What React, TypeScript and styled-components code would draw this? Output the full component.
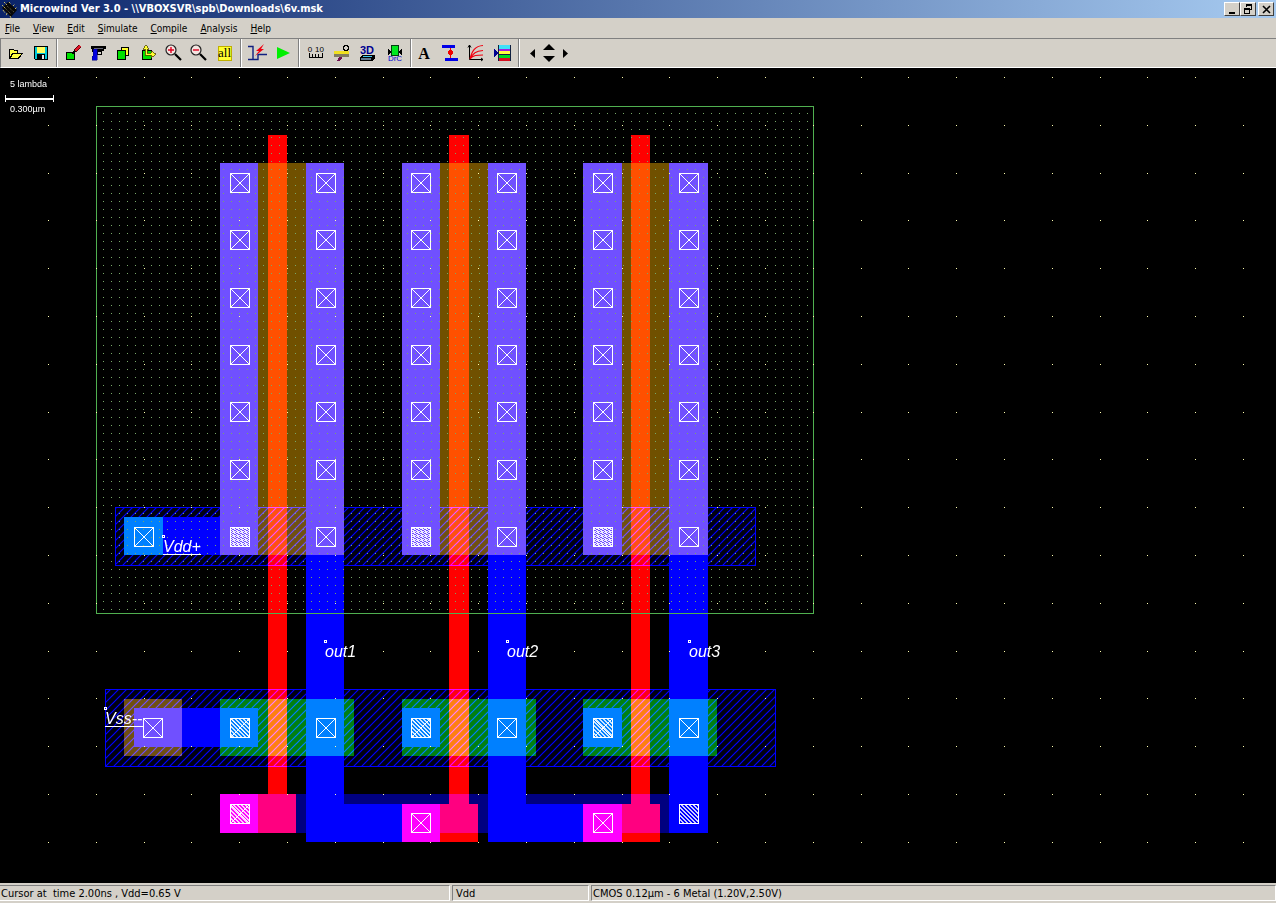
import React from "react";
import styled, { createGlobalStyle, css } from "styled-components";

const FACE = "#d4d0c8";
const SHADOW = "#808080";
const UI_FONT = '"DejaVu Sans Condensed", "Liberation Sans", sans-serif';

const GlobalStyle = createGlobalStyle`
  *, *::before, *::after { box-sizing: border-box; }
  body { margin: 0; background: ${FACE}; font-family: ${UI_FONT}; font-size: 10px; color: #000; }
`;

const Window = styled.div`
  display: flex;
  flex-direction: column;
  min-height: 100vh;
`;

const TitleBar = styled.header`
  display: flex;
  align-items: center;
  gap: 2px;
  height: 18px;
  padding: 0 2px 0 1px;
  background: linear-gradient(to right, #0a246a, #a6caf0);
`;

const Title = styled.h1`
  flex: 1;
  margin: 0;
  font-size: 11px;
  line-height: 18px;
  font-weight: bold;
  color: #fff;
  white-space: nowrap;
`;

const WindowButton = styled.button<{ $apart?: boolean }>`
  display: flex;
  align-items: center;
  justify-content: center;
  width: 16px;
  height: 14px;
  padding: 0;
  margin-left: ${(p) => (p.$apart ? "2px" : "0")};
  border: 1px solid;
  border-color: #fff #404040 #404040 #fff;
  background: ${FACE};
`;

const Controls = styled.div`
  display: flex;
`;

const MenuBar = styled.nav`
  display: flex;
  gap: 13px;
  height: 20px;
  padding: 1px 5px 0;
`;

const MenuButton = styled.button`
  padding: 0;
  border: 0;
  background: none;
  color: #000;
  font: 10px/19px ${UI_FONT};
`;

const ToolBar = styled.div`
  display: flex;
  align-items: center;
  height: 30px;
  padding-left: 1px;
  border-top: 1px solid ${SHADOW};
  border-left: 1px solid ${SHADOW};
  border-bottom: 1px solid #fff;
`;

const ToolGroup = styled.div<{ $start: number; $end: number }>`
  display: flex;
  align-items: center;
  height: 28px;
  padding: 0 ${(p) => p.$end}px 0 ${(p) => p.$start}px;

  & + & {
    border-left: 1px solid ${SHADOW};
    box-shadow: inset 1px 0 0 #fff;
  }
`;

const ToolButton = styled.button<{ $wide?: boolean }>`
  display: flex;
  align-items: center;
  justify-content: center;
  width: ${(p) => (p.$wide ? "26px" : "25px")};
  height: 26px;
  padding: 0;
  border: 0;
  background: none;
`;

const PanPad = styled.div`
  display: grid;
  grid-template-columns: 5px 28px 5px;
  align-items: center;
  justify-items: center;
`;

const PanColumn = styled.div`
  display: flex;
  flex-direction: column;
  gap: 6px;
`;

const PanButton = styled.button`
  display: block;
  padding: 0;
  border: 0;
  background: none;
  line-height: 0;
`;

const Icon = styled.svg`
  display: block;
  overflow: visible;
`;

const IconText = styled.text<{ $size: number; $serif?: boolean; $bold?: boolean }>`
  font-family: ${(p) => (p.$serif ? '"Liberation Serif", serif' : '"Liberation Sans", sans-serif')};
  font-size: ${(p) => p.$size}px;
  font-weight: ${(p) => (p.$bold ? "bold" : "normal")};
  text-anchor: middle;
`;

const Workspace = styled.main`
  flex: 1;
  display: flex;
  min-height: 815px;
  background: #000;
`;

const Drawing = styled.svg`
  flex: 1;
  display: block;
  min-width: 0;
  isolation: isolate;
`;

const additive = css`
  mix-blend-mode: screen;
`;

type Material = "metal1" | "metal2" | "poly" | "pdiff" | "ndiff";

const materialColor: Record<Material, string> = {
  metal1: "#0000ff",
  metal2: "#000080",
  poly: "#ff0000",
  pdiff: "#705000",
  ndiff: "#008000",
};

const Layer = styled.path<{ $material: Material }>`
  fill: ${(p) => materialColor[p.$material]};
  ${additive}
`;

const HatchedBus = styled.rect`
  stroke: #0000ff;
  ${additive}
`;

const NetLabel = styled.text`
  font: italic 16px "Liberation Sans", sans-serif;
  fill: #fff;
`;

const ScaleText = styled.text`
  font: 9px "Liberation Sans", sans-serif;
  fill: #fff;
`;

const StatusBar = styled.footer`
  display: grid;
  grid-template-columns: 450px 137px 1fr;
  gap: 2px;
  height: 21px;
  padding: 2px 0 2px;
  border-bottom: 1px solid #fff;
`;

const StatusPane = styled.div`
  padding: 0 1px;
  border: 1px solid;
  border-color: ${SHADOW} #fff #fff ${SHADOW};
  font-size: 11px;
  line-height: 16px;
  white-space: pre;
  overflow: hidden;

  &:first-child { border-left: 0; }
  &:nth-child(2) { padding-left: 3px; }
`;

type Box = [x1: number, y1: number, x2: number, y2: number];

const boxes = (list: Box[]) =>
  list.map(([a, b, c, d]) => `M${a} ${b}H${c}V${d}H${a}Z`).join("");

const materials: { material: Material; shapes: Box[] }[] = [
  {
    material: "pdiff",
    shapes: [
      [220, 163, 344, 555],
      [402, 163, 526, 555],
      [583, 163, 708, 555],
      [124, 699, 182, 756],
    ],
  },
  {
    material: "ndiff",
    shapes: [
      [124, 517, 163, 555],
      [220, 699, 354, 756],
      [402, 699, 536, 756],
      [583, 699, 717, 756],
    ],
  },
  {
    material: "poly",
    shapes: [
      [268, 135, 287, 794],
      [220, 794, 296, 833],
      [449, 135, 469, 804],
      [402, 804, 478, 842],
      [631, 135, 650, 804],
      [583, 804, 660, 842],
    ],
  },
  {
    material: "metal1",
    shapes: [
      [124, 517, 220, 555],
      [220, 163, 258, 555],
      [402, 163, 440, 555],
      [583, 163, 622, 555],
      [306, 163, 344, 842],
      [344, 804, 440, 842],
      [488, 163, 526, 842],
      [526, 804, 622, 842],
      [669, 163, 708, 833],
      [134, 708, 258, 747],
      [402, 708, 440, 747],
      [583, 708, 622, 747],
      [220, 794, 258, 833],
    ],
  },
  { material: "metal2", shapes: [[220, 794, 708, 833]] },
];

const rowCentres = [183, 240, 298, 355, 412, 470];
const leftCentres = [240, 421, 603];
const rightCentres = [326, 507, 689];

type Cut = { x: number; y: number; fill?: "via" | "stack"; cross?: boolean };

const contacts: Cut[] = [
  ...rowCentres.flatMap((y) => [...leftCentres, ...rightCentres].map((x) => ({ x, y }))),
  ...rightCentres.flatMap((x) => [{ x, y: 537 }, { x, y: 728 }]),
  { x: 144, y: 537 },
  { x: 153, y: 728 },
  { x: 421, y: 823 },
  { x: 603, y: 823 },
  ...leftCentres.map((x): Cut => ({ x, y: 537, fill: "stack", cross: false })),
  ...leftCentres.map((x): Cut => ({ x, y: 728, fill: "via" })),
  { x: 240, y: 814, fill: "via" },
  { x: 689, y: 814, fill: "via", cross: false },
];

const Contact = ({ x, y, fill, cross = true }: Cut) => (
  <g stroke="#fff" fill="none">
    <rect
      x={x - 9.5}
      y={y - 9.5}
      width={19}
      height={19}
      fill={fill ? `url(#${fill})` : "none"}
      shapeRendering="crispEdges"
    />
    {cross && <path d={`M${x - 9} ${y - 9}l18 18M${x + 9} ${y - 9}l-18 18`} strokeWidth={1} />}
  </g>
);

const nets = [
  { name: "Vdd+", x: 163, y: 552, px: 163, py: 536, line: 554 },
  { name: "Vss--", x: 105, y: 724, px: 105, py: 708, line: 726 },
  { name: "out1", x: 325, y: 657, px: 325, py: 641 },
  { name: "out2", x: 507, y: 657, px: 507, py: 641 },
  { name: "out3", x: 689, y: 657, px: 689, py: 641 },
];

const GRID = 47.8;
const majorDots = (() => {
  let d = "";
  for (let r = 0; r < 17; r++)
    for (let c = 0; c < 26; c++)
      d += `M${Math.round(48 + c * GRID)} ${Math.round(77 + r * GRID)}h1v1h-1z`;
  return d;
})();

const Layout = () => (
  <Drawing role="img" aria-label="Layout of three inverters">
    <defs>
      <pattern id="welldots" width="8" height="8" patternUnits="userSpaceOnUse" x="7" y="1">
        <rect width="1" height="1" fill="#78a868" />
      </pattern>
      <pattern id="hatch" width="8" height="8" patternUnits="userSpaceOnUse">
        <rect width="8" height="8" fill="#000012" />
        <path d="M-1 9L9 -1M-1 1L1 -1M7 9L9 7" stroke="#0000ff" strokeWidth="1.2" />
      </pattern>
      <pattern id="via" width="4" height="4" patternUnits="userSpaceOnUse">
        <path d="M0 0h2v1h-2zM1 1h2v1h-2zM2 2h2v1h-2zM3 3h1v1h-1zM0 3h1v1h-1z" fill="#fff" fillOpacity="0.8" />
      </pattern>
      <pattern id="stack" width="4" height="4" patternUnits="userSpaceOnUse">
        <path d="M0 0h3v1h-3zM2 1h2v1h-2zM0 2h2v1h-2zM1 3h3v1h-3z" fill="#fff" fillOpacity="0.9" />
      </pattern>
    </defs>
    <g transform="translate(0 -68)">
      <rect y="68" width="100%" height="100%" fill="#000" />
      <g shapeRendering="crispEdges">
        {materials.map((m) => (
          <Layer key={m.material} $material={m.material} d={boxes(m.shapes)} />
        ))}
      </g>
      <HatchedBus x="115.5" y="507.5" width="640" height="58" fill="url(#hatch)" />
      <HatchedBus x="105.5" y="689.5" width="670" height="77" fill="url(#hatch)" />
      <rect x="100" y="110" width="710" height="502" fill="url(#welldots)" shapeRendering="crispEdges" />
      <rect x="96.5" y="106.5" width="717" height="507" fill="none" stroke="#50b050" />
      <path d={majorDots} fill="#ffffb0" shapeRendering="crispEdges" />
      {contacts.map((c) => (
        <Contact key={`${c.x}-${c.y}`} {...c} />
      ))}
      {nets.map((n) => (
        <g key={n.name}>
          <rect x={n.px - 0.5} y={n.py - 0.5} width="2" height="2" fill="none" stroke="#fff" shapeRendering="crispEdges" />
          <NetLabel x={n.x} y={n.y}>{n.name}</NetLabel>
          {n.line && <path d={`M${n.x} ${n.line + 0.5}h38`} stroke="#fff" />}
        </g>
      ))}
      <ScaleText x="10" y="87">5 lambda</ScaleText>
      <ScaleText x="10" y="112">0.300µm</ScaleText>
      <path d="M5 98h49v2h-49zM5 95h1v7h-1zM53 95h1v7h-1z" fill="#fff" shapeRendering="crispEdges" />
    </g>
  </Drawing>
);

const Svg = ({ children, label, crisp = true }: { children: React.ReactNode; label: string; crisp?: boolean }) => (
  <Icon width="20" height="20" viewBox="0 0 20 20" aria-label={label} shapeRendering={crisp ? "crispEdges" : "auto"}>
    {children}
  </Icon>
);

const Lens = ({ plus }: { plus?: boolean }) => (
  <>
    <circle cx="7" cy="7" r="5" fill="#f4e4e0" stroke="#222" strokeWidth="1.2" />
    <path d={plus ? "M4 7h6M7 4v6" : "M4 7h6"} stroke="#e00020" strokeWidth="1.4" />
    <path d="M11 11l6 6" stroke="#000" strokeWidth="2.2" />
  </>
);

const icons: Record<string, React.ReactNode> = {
  Open: (
    <Svg label="Open">
      <path d="M4 16V6h4l1 1h4v3h5l-4 6z" fill="#000" />
      <path d="M5 14V7h3l1 1h3v2H7z" fill="#ffff40" />
      <path d="M6 15l2-4h8l-3 4z" fill="#ffff40" />
    </Svg>
  ),
  Save: (
    <Svg label="Save">
      <path d="M3 3h14v14H4l-1-1z" fill="#000" />
      <path d="M4 4h12v12H4z" fill="#00c8d8" />
      <path d="M6 4h8v6H6z" fill="#ffff60" />
      <path d="M6 11h8v5H6z" fill="#000" />
      <path d="M11 12h2v4h-2z" fill="#e8e8e8" />
    </Svg>
  ),
  Draw: (
    <Svg label="Draw">
      <path d="M2.500 9.500h8v7h-8z" fill="#00e000" stroke="#000" />
      <path d="M8 11l4-4" stroke="#000" strokeWidth="2" />
      <path d="M11 8l5-5" stroke="#600010" strokeWidth="4" />
      <path d="M11 8l5-5" stroke="#e01828" strokeWidth="2" />
    </Svg>
  ),
  Delete: (
    <Svg label="Delete">
      <path d="M2 3h15v3h-2v2H9v1H3V6H2z" fill="#000" />
      <path d="M8 8h4v3H8z" fill="none" stroke="#000" />
      <path d="M4 6h4v11H3v-4h1z" fill="#0000e0" stroke="#000080" strokeWidth="0.500" />
      <path d="M5 5h9" stroke="#667" />
    </Svg>
  ),
  Copy: (
    <Svg label="Copy">
      <path d="M7.500 4.500h7v8h-7z" fill="#ffff30" stroke="#000" />
      <path d="M3.500 7.500h8v9h-8z" fill="#00e000" stroke="#000" />
    </Svg>
  ),
  Move: (
    <Svg label="Move">
      <path d="M3.500 7.500h9v9h-9z" fill="#00e000" stroke="#000" />
      <path d="M7 2l3 4H8v4h4V8l5 3-5 4v-3H6V6H4z" fill="#ffff30" stroke="#504800" strokeWidth="0.800" />
    </Svg>
  ),
  "Zoom in": <Svg label="Zoom in" crisp={false}><Lens plus /></Svg>,
  "Zoom out": <Svg label="Zoom out" crisp={false}><Lens /></Svg>,
  "View all": (
    <Svg label="View all">
      <path d="M4 3h13v14H4z" fill="#ffff30" stroke="#c0b000" />
      <IconText x="10.500" y="14" $size={13} $serif>all</IconText>
    </Svg>
  ),
  Section: (
    <Svg label="Process section" crisp={false}>
      <path d="M1 3.500h5v13h5v-5h9M6 16.500H1" fill="none" stroke="#102080" strokeWidth="1.400" />
      <path d="M17 1l-8 7h3l-4 5 9-7h-3z" fill="#f00010" />
    </Svg>
  ),
  Run: <Svg label="Run simulation" crisp={false}><path d="M4 4l13 6-13 6z" fill="#00f000" /></Svg>,
  Measure: (
    <Svg label="Measure distance">
      <IconText x="4" y="9" $size={8}>0</IconText>
      <IconText x="13.500" y="9" $size={8}>10</IconText>
      <path d="M3.500 10v4h13v-4M6.500 11v3M9.500 11v3M12.500 11v3" fill="none" stroke="#000" />
    </Svg>
  ),
  "2D section": (
    <Svg label="2D cross section">
      <path d="M6 18l8-10" stroke="#701050" strokeWidth="2.500" />
      <path d="M2 8h15v3H2z" fill="#f0e020" />
      <path d="M2 11h15v3H2z" fill="#807c60" />
      <circle cx="14" cy="5" r="2.500" fill="none" stroke="#000" strokeWidth="1.500" />
    </Svg>
  ),
  "3D view": (
    <Svg label="3D process view">
      <IconText x="9" y="11" $size={11} $bold fill="#000090">3D</IconText>
      <path d="M2 14l3-2h12v3l-3 3H2z" fill="#000" />
      <path d="M4 14l2-1h9l-2 1z" fill="#40c8f0" />
      <path d="M3 15h10v2H3z" fill="#607890" />
    </Svg>
  ),
  DRC: (
    <Svg label="Design rule check">
      <path d="M7.500 2.500h7v10h-7z" fill="#00e820" stroke="#004010" />
      <path d="M4 6l4 3-4 3zM18 6l-4 3 4 3z" fill="#000" />
      <IconText x="11" y="18" $size={8} fill="#0000d0">DrC</IconText>
    </Svg>
  ),
  Text: <Svg label="Add text"><IconText x="9" y="16" $size={16} $serif $bold>A</IconText></Svg>,
  Connect: (
    <Svg label="Connect layers">
      <path d="M1 2h13v3H1zM4 15h13v3H4z" fill="#0000e8" />
      <path d="M9 5h1v10H9zM8 7h3v1H8zM7 8h5v3H7zM8 11h3v1H8z" fill="#f00000" />
    </Svg>
  ),
  MOS: (
    <Svg label="MOS characteristics" crisp={false}>
      <path d="M2.500 2v14.500H16M1 4.500l1.500-2.500L4 4.500M14 15l2 1.500-2 1.500" fill="none" stroke="#000" />
      <path d="M3 16C5 8 8 3 16 2.500M3 16c3-6 6-8 13-8.500M3 16c3-4 7-4 13-4" fill="none" stroke="#f00010" strokeWidth="1.200" />
    </Svg>
  ),
  Palette: (
    <Svg label="Layer palette">
      <path d="M5 2h13v16H5z" fill="#102040" />
      <path d="M6 2h11v4H6z" fill="#40e0f8" />
      <path d="M6 6h11v2H6z" fill="#a020e0" />
      <path d="M6 8h11v3H6z" fill="#ffff40" />
      <path d="M6 12h11v3H6z" fill="#00d820" />
      <path d="M6 15h11v3H6z" fill="#d81020" />
      <path d="M1 6l5 4-5 4z" fill="#000090" />
    </Svg>
  ),
};

const toolGroups: { start: number; end: number; wide?: boolean; tools: string[] }[] = [
  { start: 0, end: 2, wide: true, tools: ["Open", "Save"] },
  { start: 4, end: 4, tools: ["Draw", "Delete", "Copy", "Move", "Zoom in", "Zoom out", "View all"] },
  { start: 3, end: 2, wide: true, tools: ["Section", "Run"] },
  { start: 4, end: 3, wide: true, tools: ["Measure", "2D section", "3D view", "DRC"] },
  { start: 1, end: 2, wide: true, tools: ["Text", "Connect", "MOS", "Palette"] },
];

const Arrow = ({ d, w, h }: { d: string; w: number; h: number }) => (
  <Icon width={w} height={h} aria-hidden="true"><path d={d} fill="#000" /></Icon>
);

const menus = ["File", "View", "Edit", "Simulate", "Compile", "Analysis", "Help"];

export default function App() {
  return (
    <Window>
      <GlobalStyle />
      <TitleBar>
        <Icon width="17" height="17" viewBox="0 0 17 17" aria-hidden="true">
          <path d="M1 7l6-6 9 8-6 7z" fill="#080808" />
          <path d="M3 1l3 3M1 4l3 3M8 1l2 2M12 5l2-2M14 8l2-2M2 9l2 3M6 12l-1 3M9 15l1 2" stroke="#c8b860" strokeWidth="1" strokeDasharray="2 1" />
          <path d="M6 5l7 6M4 7l6 6" stroke="#686848" strokeDasharray="1 1" />
        </Icon>
        <Title>{"Microwind Ver 3.0 - \\\\VBOXSVR\\spb\\Downloads\\6v.msk"}</Title>
        <Controls>
          <WindowButton aria-label="Minimize">
            <Icon width="10" height="10"><path d="M2 8h6v2H2z" /></Icon>
          </WindowButton>
          <WindowButton aria-label="Restore">
            <Icon width="10" height="10" shapeRendering="crispEdges">
              <path d="M3 0h6v6H7V5h1V2H4v1H3zM1 4h6v6H1zM2 6v3h4V6z" fillRule="evenodd" />
            </Icon>
          </WindowButton>
          <WindowButton aria-label="Close" $apart>
            <Icon width="10" height="10"><path d="M2 2l7 7M9 2l-7 7" stroke="#000" strokeWidth="1.600" /></Icon>
          </WindowButton>
        </Controls>
      </TitleBar>
      <MenuBar>
        {menus.map((m) => (
          <MenuButton key={m}><u>{m[0]}</u>{m.slice(1)}</MenuButton>
        ))}
      </MenuBar>
      <ToolBar role="toolbar">
        {toolGroups.map((g) => (
          <ToolGroup key={g.tools[0]} $start={g.start} $end={g.end}>
            {g.tools.map((t) => (
              <ToolButton key={t} $wide={g.wide} aria-label={t}>{icons[t]}</ToolButton>
            ))}
          </ToolGroup>
        ))}
        <ToolGroup $start={11} $end={11}>
          <PanPad>
            <PanButton aria-label="Pan left"><Arrow w={5} h={9} d="M5 0v9L0 4.500z" /></PanButton>
            <PanColumn>
              <PanButton aria-label="Pan up"><Arrow w={12} h={6} d="M0 6h12L6 0z" /></PanButton>
              <PanButton aria-label="Pan down"><Arrow w={12} h={6} d="M0 0h12L6 6z" /></PanButton>
            </PanColumn>
            <PanButton aria-label="Pan right"><Arrow w={5} h={9} d="M0 0v9L5 4.500z" /></PanButton>
          </PanPad>
        </ToolGroup>
      </ToolBar>
      <Workspace>
        <Layout />
      </Workspace>
      <StatusBar>
        <StatusPane>{"Cursor at  time 2.00ns , Vdd=0.65 V"}</StatusPane>
        <StatusPane>Vdd</StatusPane>
        <StatusPane>CMOS 0.12µm - 6 Metal (1.20V,2.50V)</StatusPane>
      </StatusBar>
    </Window>
  );
}
